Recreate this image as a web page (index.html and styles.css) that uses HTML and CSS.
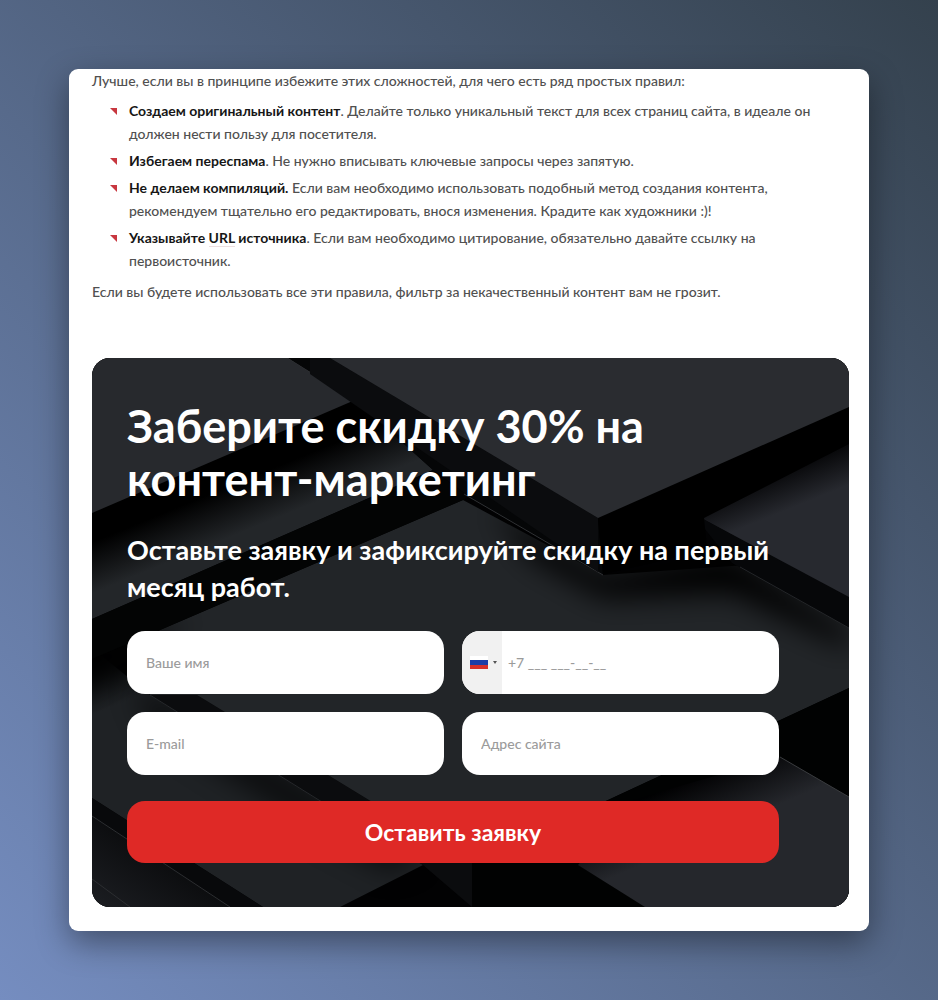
FILE: index.html
```html
<!DOCTYPE html>
<html lang="ru">
<head>
  <meta charset="UTF-8">
  <meta name="viewport" content="width=device-width, initial-scale=1">
  <title>Скидка 30% на контент-маркетинг</title>
  <link rel="stylesheet" href="styles.css">
</head>
<body>
  <main class="card">
    <article class="article">
      <p>Лучше, если вы в принципе избежите этих сложностей, для чего есть ряд простых правил:</p>
      <ul class="rules">
        <li><b>Создаем оригинальный контент</b>. Делайте только уникальный текст для всех страниц сайта, в идеале он должен нести пользу для посетителя.</li>
        <li><b>Избегаем переспама</b>. Не нужно вписывать ключевые запросы через запятую.</li>
        <li><b>Не делаем компиляций.</b> Если вам необходимо использовать подобный метод создания контента, рекомендуем тщательно его редактировать, внося изменения. Крадите как художники :)!</li>
        <li><b>Указывайте <span class="term">URL</span> источника</b>. Если вам необходимо цитирование, обязательно давайте ссылку на первоисточник.</li>
      </ul>
      <p>Если вы будете использовать все эти правила, фильтр за некачественный контент вам не грозит.</p>
    </article>

    <section class="promo">
      <svg class="promo-bg" viewBox="0 0 757 549" preserveAspectRatio="xMidYMid slice" aria-hidden="true">
        <defs>
          <linearGradient id="plateC" gradientUnits="userSpaceOnUse" x1="118" y1="136" x2="136" y2="180">
            <stop offset="0" stop-color="#000"/>
            <stop offset="1" stop-color="#232629"/>
          </linearGradient>
          <linearGradient id="plateE" gradientUnits="userSpaceOnUse" x1="653" y1="120" x2="670" y2="162">
            <stop offset="0" stop-color="#010102"/>
            <stop offset="1" stop-color="#27292f"/>
          </linearGradient>
          <linearGradient id="plateF" gradientUnits="userSpaceOnUse" x1="10" y1="295" x2="30" y2="345">
            <stop offset="0" stop-color="#020303"/>
            <stop offset="1" stop-color="#1f2225"/>
          </linearGradient>
          <linearGradient id="plateH" gradientUnits="userSpaceOnUse" x1="610" y1="415" x2="634" y2="470">
            <stop offset="0" stop-color="#010102"/>
            <stop offset="1" stop-color="#25272c"/>
          </linearGradient>
          <linearGradient id="plateG" gradientUnits="userSpaceOnUse" x1="90" y1="515" x2="50" y2="575">
            <stop offset="0" stop-color="#0c0d0f"/>
            <stop offset="1" stop-color="#1b1d21"/>
          </linearGradient>
          <filter id="soft" x="-30%" y="-50%" width="160%" height="200%">
            <feGaussianBlur stdDeviation="14"/>
          </filter>
        </defs>
        <rect width="757" height="549" fill="#020203"/>
        <!-- lower left plates -->
        <path d="M0 290L58 337L331 507L248 549H171L0 440Z" fill="url(#plateF)"/>
        <path d="M40 325L105 360L330 500L300 515L225 475L60 370Z" fill="#000" opacity=".6" filter="url(#soft)"/>
        <path d="M0 440L171 549H138L0 458Z" fill="#08090b"/>
        <path d="M0 458L138 549H0Z" fill="url(#plateG)"/>
        <path d="M0 458L138 549M0 521L38 549" stroke="#2c2e31" fill="none"/>
        <!-- central plate -->
        <path d="M58 337L92 329L380 505V549L331 507Z" fill="#0b0c0e"/>
        <path d="M58 337L230 444" stroke="#26282b"/>
        <path d="M68 272L371 142L511 217L757 200V330L516 442L380 505L105 337L58 337L40 300Z" fill="#222528"/>
        <path d="M-20 290L68 272L98 259L50 300L-20 335Z" fill="#000" filter="url(#soft)"/>
        <path d="M400 150L511 217L600 200L640 195L757 275V290L640 235L511 240L440 200Z" fill="#000" filter="url(#soft)"/>
        <!-- left middle plate -->
        <path d="M0 155L263 42L341 112L0 261Z" fill="url(#plateC)"/>
        <path d="M0 261L341 112L378 139L68 272L0 301Z" fill="#030404"/>
        <!-- upper plates -->
        <path d="M0 0H196L263 42L0 155Z" fill="#27292d"/>
        <path d="M196 0L263 42" stroke="#393b3e"/>
        <path d="M196 0H238L506 160L511 217L378 139L341 112L263 42Z" fill="#050607"/>
        <path d="M372 136L511 217" stroke="#303235"/>
        <path d="M218 0H238L506 160V214L218 16Z" fill="#0b0c0e"/>
        <!-- right plate -->
        <path d="M600 155L757 78V241Z" fill="url(#plateE)"/>
        <path d="M600 155L757 239V270L640 205Z" fill="#060709"/>
        <path d="M648 209L757 270" stroke="#242629"/>
        <path d="M506 160L757 49V86L612 160L615 190L560 205L511 216Z" fill="#000"/>
        <path d="M238 0H757V49L506 160Z" fill="#2a2c30"/>
        <!-- lower right plates -->
        <path d="M757 330V549H380V505L516 442Z" fill="#010202"/>
        <path d="M486 507L540 442L688 399L757 439V549H553Z" fill="url(#plateH)"/>
        <path d="M688 399L757 439" stroke="#3a3c3f"/>
      </svg>

      <div class="promo-body">
        <h1>Заберите скидку 30% на контент-маркетинг</h1>
        <h2>Оставьте заявку и зафиксируйте скидку на первый месяц работ.</h2>
        <form class="form">
          <input class="field" type="text" name="name" placeholder="Ваше имя" aria-label="Ваше имя">
          <div class="field phone">
            <button class="country" type="button" aria-label="Код страны">
              <span class="flag"></span>
              <span class="arrow"></span>
            </button>
            <input class="phone-input" type="tel" name="phone" placeholder="+7 ___ ___-__-__" aria-label="Телефон">
          </div>
          <input class="field" type="email" name="email" placeholder="E-mail" aria-label="E-mail">
          <input class="field" type="text" name="site" placeholder="Адрес сайта" aria-label="Адрес сайта">
          <button class="submit" type="submit">Оставить заявку</button>
        </form>
      </div>
    </section>
  </main>
</body>
</html>
```

FILE: styles.css
```css
* {
  box-sizing: border-box;
}
body {
  margin: 0;
  padding: 69px;
  min-height: 100vh;
  font-family: Lato, sans-serif;
  font-size: 14px;
  font-weight: 500;
  line-height: 23px;
  color: #505050;
  background: linear-gradient(45deg, #758dc0, #34414d);
}
.card {
  padding: 0 20px 24px 23px;
  background: #fff;
  border-radius: 9px;
  box-shadow: 0 12px 32px rgba(0, 0, 0, 0.4);
}
.article p {
  margin: 0;
}
.rules {
  list-style: none;
  margin: 7px 0 8px;
  padding: 0 0 0 37px;
}
.rules li {
  position: relative;
  margin-bottom: 4px;
}
/* red corner marker */
.rules li::before {
  content: "";
  position: absolute;
  left: -19px;
  top: 9px;
  width: 7px;
  height: 7px;
  background: #c8373f;
  clip-path: polygon(0 0, 100% 0, 100% 100%);
}
.rules b {
  font-weight: 700;
  color: #161616;
}
.term {
  border-bottom: 1px solid #ecdfe0;
}

.promo {
  position: relative;
  margin-top: 55px;
  border-radius: 18px;
  overflow: hidden;
  background: #1c1e21;
}
.promo-bg {
  position: absolute;
  top: 0;
  left: 0;
  width: 100%;
  height: 100%;
}
.promo-body {
  position: relative;
  padding: 42px 70px 44px 35px;
  color: #fff;
}
h1 {
  margin: 0 0 25px;
  font-size: 45px;
  line-height: 53px;
  font-weight: 700;
}
h2 {
  margin: 0 0 26px;
  font-size: 27px;
  line-height: 37px;
  font-weight: 700;
}

.form {
  display: grid;
  grid-template-columns: 1fr 1fr;
  gap: 18px;
}
.field {
  width: 100%;
  height: 63px;
  padding: 0 19px;
  border: 0;
  border-radius: 18px;
  background: #fff;
  font-family: inherit;
  font-size: 14px;
  font-weight: 500;
  color: #222;
}
.phone {
  display: flex;
  padding: 0;
  overflow: hidden;
}
.phone-input {
  flex: 1;
  min-width: 0;
  padding: 0 6px;
  border: 0;
  background: none;
  font-family: inherit;
  font-size: 14px;
  font-weight: 500;
}
::placeholder {
  color: #9b9b9b;
  opacity: 1;
}
.country {
  display: flex;
  align-items: center;
  gap: 5px;
  width: 40px;
  padding: 0 0 0 8px;
  border: 0;
  background: #f1f1f1;
}
.flag {
  width: 18px;
  height: 13px;
  background: linear-gradient(#fff 33%, #1c3da8 33% 66%, #d6302a 66%);
}
.arrow {
  border: 2px solid transparent;
  border-top: 3px solid #555;
  border-bottom: 0;
}
.submit {
  grid-column: 1 / -1;
  height: 62px;
  margin-top: 8px;
  border: 0;
  border-radius: 18px;
  background: #df2926;
  color: #fff;
  font-family: inherit;
  font-size: 23px;
  font-weight: 700;
  cursor: pointer;
}
@media screen and (max-width: 600px) {
  body {
    padding: 16px;
  }
  .promo-body {
    padding: 24px;
  }
  h1 {
    font-size: 28px;
    line-height: 36px;
  }
  h2 {
    font-size: 18px;
    line-height: 26px;
  }
  .form {
    grid-template-columns: 1fr;
  }
}
```
